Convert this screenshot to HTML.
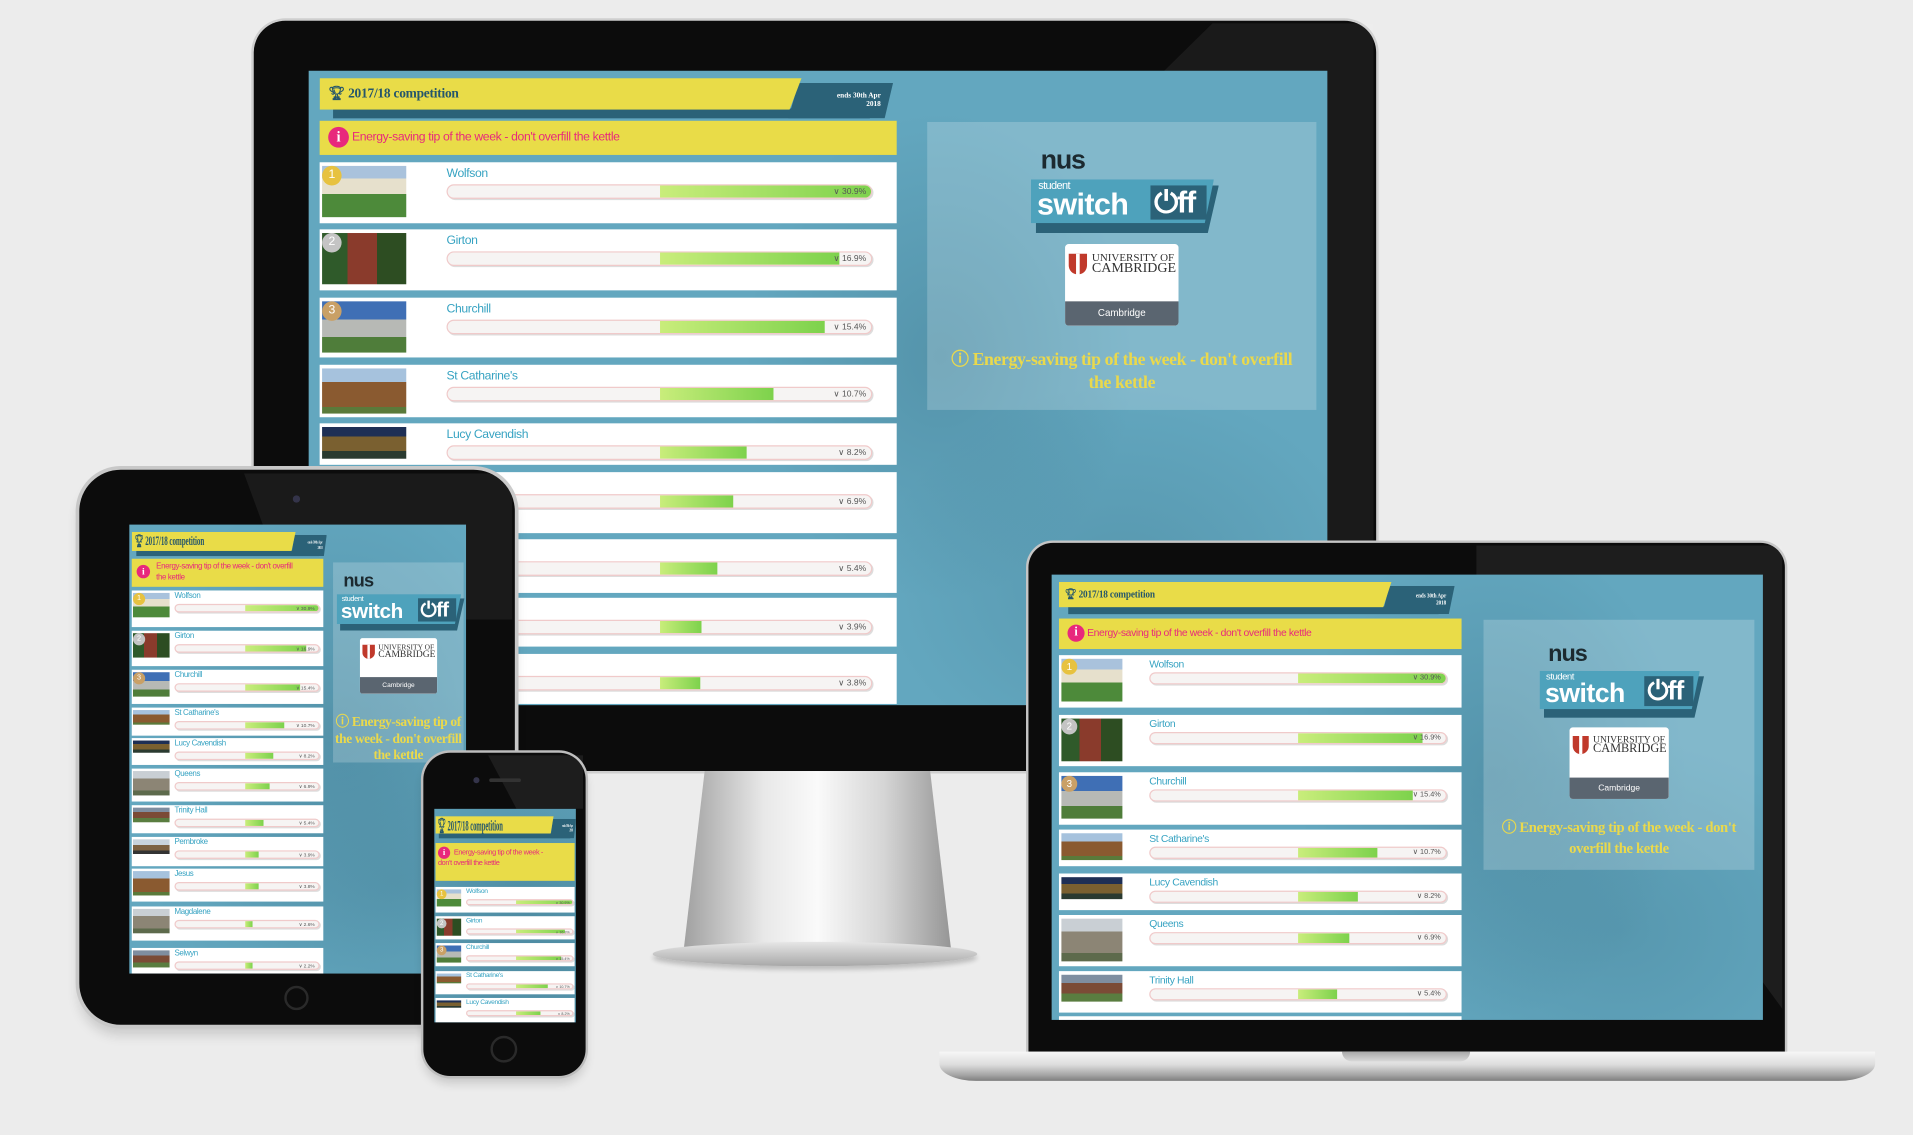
<!DOCTYPE html>
<html><head><meta charset="utf-8">
<style>
*{margin:0;padding:0;box-sizing:border-box}
html,body{width:1913px;height:1135px;overflow:hidden;background:#ececec}
#w{position:absolute;left:0;top:0;width:1568px;height:930px;transform:scale(1.22);transform-origin:0 0;font-family:"Liberation Sans Narrow","Liberation Sans",sans-serif}
.a{position:absolute}
.scr{position:absolute;overflow:hidden;background:radial-gradient(ellipse 160px 200px at 62% 45%,rgba(40,90,110,.25),transparent),radial-gradient(ellipse 200px 160px at 80% 80%,rgba(40,90,110,.2),transparent),#63a7bf}
.hg{position:absolute;width:470px;height:37px;transform-origin:0 0}
.hg .st{position:absolute;left:11px;top:25px;width:440px;height:8px;background:#2b6278}
.hg .tg{position:absolute;left:384px;top:4px;width:86px;height:29px;background:#2b6278;clip-path:polygon(10% 0,100% 0,92% 100%,0 100%);color:#fff;font:bold 6px "Liberation Serif",serif;text-align:right;padding:8px 10px 0 0;line-height:7px}
.hg .y{position:absolute;left:0;top:0;width:395px;height:26px;background:#e9dc48;clip-path:polygon(0 0,100% 0,97.5% 100%,0 100%);color:#25566b;font:bold 11px "Liberation Serif",serif;padding:6px 0 0 7px;letter-spacing:-.2px}
.tip{position:absolute;background:#e9dc48;color:#e8287c;letter-spacing:-.3px}
.ic{display:inline-block;border-radius:50%;background:#e8287c;color:#fff;text-align:center;font-family:"Liberation Serif",serif;font-weight:bold;vertical-align:middle;letter-spacing:0}
.row{position:absolute;background:#fff}
.row .im{position:absolute}
.row .bd{position:absolute;border-radius:50%;color:#fff;text-align:center;font-family:"Liberation Sans",sans-serif}
.row .nm{position:absolute;color:#37a3c2;white-space:nowrap;letter-spacing:-.3px}
.row .bar{position:absolute;border-radius:99px;background:#f6f4f3;border:1px solid #f0caca;overflow:hidden;box-shadow:1px 1px 0 #ddd}
.row .f{position:absolute;top:0;bottom:0;background:linear-gradient(90deg,#c9ed7b,#7dd24c)}
.row .v{position:absolute;right:4px;top:0;color:#555;font-family:"Liberation Sans",sans-serif}
.m .row{left:9px;width:473px}.m .im{left:2px;top:3px;width:69px;height:42px}.m .bd{left:2px;top:3px;width:16px;height:16px;font-size:10px;line-height:16px}.m .nm{left:104px;top:4px;font-size:10px}.m .bar{left:104px;top:18px;width:349px;height:12px}.m .f{left:174px}.m .v{font-size:7px;line-height:11px}
.l .row{left:6px;width:330px}.l .im{left:2px;top:3px;width:50px;height:35px}.l .bd{left:2px;top:3px;width:13px;height:13px;font-size:8px;line-height:13px}.l .nm{left:74px;top:2px;font-size:8.5px}.l .bar{left:74px;top:14px;width:244px;height:10px}.l .f{left:121px}.l .v{font-size:6px;line-height:9px}
.t .row{left:2px;width:157px}.t .im{left:1px;top:2px;width:30px;height:20px}.t .bd{left:1px;top:2px;width:10px;height:10px;font-size:6px;line-height:10px}.t .nm{left:35px;top:1px;font-size:6.5px}.t .bar{left:35px;top:11px;width:119px;height:7px}.t .f{left:57px}.t .v{font-size:4px;line-height:6px;right:3px}
.p .row{left:1px;width:114px}.p .im{left:1px;top:2px;width:20px;height:14px}.p .bd{left:1px;top:2px;width:8px;height:8px;font-size:5px;line-height:8px}.p .nm{left:25px;top:1px;font-size:5.5px}.p .bar{left:25px;top:10px;width:88px;height:5px}.p .f{left:40px}.p .v{font-size:3px;line-height:4px;right:2px}
.g1{background:#e7c240}.g2{background:#c4c4c4}.g3{background:#c9a066}
.i1{background:linear-gradient(#a9c2dc 0 25%,#e6e0cc 25% 55%,#4d8a3a 55%)}
.i2{background:linear-gradient(90deg,#2f5a2a 0 30%,#8a3b2c 30% 65%,#2d4d22 65%)}
.i3{background:linear-gradient(#3f6fb5 0 35%,#b7b9b5 35% 70%,#4f7d3a 70%)}
.i4{background:linear-gradient(#a6c2dd 0 30%,#8a5a30 30% 85%,#5a7a3a 85%)}
.i5{background:linear-gradient(#1e2f55 0 30%,#7a6030 30% 75%,#2a3a30 75%)}
.i6{background:linear-gradient(#c9cfd4 0 30%,#8c8575 30% 80%,#5d6a4c 80%)}
.i7{background:linear-gradient(#7f8ea0 0 30%,#7b4b36 30% 70%,#5a7d40 70%)}
.i8{background:linear-gradient(#c8d3dc 0 40%,#7d6242 40% 75%,#333 75%)}
.pn{position:absolute;background:rgba(255,255,255,.2)}
.lg{position:absolute;width:160px;height:147px;transform-origin:0 0}
.lg .nus{position:absolute;left:8px;top:-4px;font:bold 22px "Liberation Sans",sans-serif;color:#1c2a30;letter-spacing:-1px}
.lg .bg1{position:absolute;left:4px;top:30px;width:150px;height:39px;background:#2b6278;clip-path:polygon(0 0,100% 0,94% 100%,0 100%)}
.lg .bg2{position:absolute;left:0;top:25px;width:150px;height:36px;background:#4ea2bc;clip-path:polygon(0 0,100% 0,95% 100%,0 100%)}
.lg .sw{position:absolute;left:5px;top:24px;color:#fff;font:bold 25px "Liberation Sans",sans-serif;letter-spacing:-.5px}
.lg .sw small{position:absolute;left:1px;top:1px;font-size:9px;font-weight:normal}
.lg .sw b{display:block;padding-top:8px}
.lg .of{position:absolute;left:98px;top:30px;width:46px;height:28px;background:#2b6278;color:#fff;font:bold 25px "Liberation Sans",sans-serif;line-height:28px;padding-left:3px;letter-spacing:-1px}
.lg .cd{position:absolute;left:28px;top:78px;width:93px;height:67px;background:#fff;border-radius:3px;overflow:hidden}
.lg .cd .u{position:absolute;left:22px;top:7px;font:9px/9px "Liberation Serif",serif;color:#333}
.lg .cd .u span{font-size:11.5px}
.lg .cd .sh{position:absolute;left:3px;top:8px;width:15px;height:17px;background:#c0392b;border-radius:0 0 8px 8px}
.lg .cd .sh:after{content:"";position:absolute;left:6px;top:0;width:3px;height:17px;background:#fff}
.lg .cd .gb{position:absolute;left:0;bottom:0;width:100%;height:20px;background:#5a6570;color:#fff;font-size:8px;text-align:center;line-height:20px}
.tt{position:absolute;color:#ead94c;font-family:"Liberation Serif",serif;font-weight:bold;text-align:center;letter-spacing:-.3px}
</style></head><body><div id="w">

<!-- MONITOR -->
<div class="a" style="left:208px;top:17px;width:920px;height:615px;background:#0c0c0c;border-radius:26px 26px 4px 4px;box-shadow:0 0 0 2px #cfcfcf"></div>
<div class="a" style="left:950px;top:19px;width:176px;height:540px;background:rgba(255,255,255,.06);clip-path:polygon(25% 0,100% 0,100% 100%,0 8%)"></div>
<div class="a" style="left:560px;top:632px;width:220px;height:150px;background:linear-gradient(90deg,#a0a0a0,#e8e8e8 30%,#fafafa 50%,#d5d5d5 75%,#959595);clip-path:polygon(8% 0,92% 0,100% 100%,0 100%)"></div>
<div class="a" style="left:535px;top:772px;width:266px;height:20px;border-radius:50%;background:linear-gradient(#e6e6e6,#a8a8a8);box-shadow:0 3px 4px rgba(0,0,0,.2)"></div>

<div class="scr m" style="left:253px;top:58px;width:835px;height:520px">
 <div class="hg" style="left:9px;top:6px"><div class="st"></div><div class="tg">ends 30th Apr<br>2018</div><div class="y">&#127942;&#xFE0E; 2017/18 competition</div></div>
 <div class="tip" style="left:9px;top:41px;width:473px;height:28px;font-size:10px;padding:5px 0 0 7px"><span class="ic" style="width:17px;height:17px;font-size:12px;line-height:17px">i</span> Energy-saving tip of the week - don't overfill the kettle</div>
 <div class="row" style="top:75px;height:50px"><div class="im i1"></div><div class="bd g1">1</div><div class="nm">Wolfson</div><div class="bar"><div class="f" style="width:174px"></div><span class="v">&#x2228; 30.9%</span></div></div>
 <div class="row" style="top:130px;height:50px"><div class="im i2"></div><div class="bd g2">2</div><div class="nm">Girton</div><div class="bar"><div class="f" style="width:147px"></div><span class="v">&#x2228; 16.9%</span></div></div>
 <div class="row" style="top:186px;height:49px"><div class="im i3"></div><div class="bd g3">3</div><div class="nm">Churchill</div><div class="bar"><div class="f" style="width:135px"></div><span class="v">&#x2228; 15.4%</span></div></div>
 <div class="row" style="top:241px;height:43px"><div class="im i4" style="height:37px"></div><div class="nm">St Catharine's</div><div class="bar"><div class="f" style="width:93px"></div><span class="v">&#x2228; 10.7%</span></div></div>
 <div class="row" style="top:289px;height:34px"><div class="im i5" style="height:26px"></div><div class="nm">Lucy Cavendish</div><div class="bar"><div class="f" style="width:71px"></div><span class="v">&#x2228; 8.2%</span></div></div>
 <div class="row" style="top:329px;height:50px"><div class="im i6"></div><div class="nm">Queens</div><div class="bar"><div class="f" style="width:60px"></div><span class="v">&#x2228; 6.9%</span></div></div>
 <div class="row" style="top:384px;height:44px"><div class="im i7" style="height:30px"></div><div class="nm">Trinity Hall</div><div class="bar"><div class="f" style="width:47px"></div><span class="v">&#x2228; 5.4%</span></div></div>
 <div class="row" style="top:432px;height:40px"><div class="im i8" style="height:30px"></div><div class="nm">Pembroke</div><div class="bar"><div class="f" style="width:34px"></div><span class="v">&#x2228; 3.9%</span></div></div>
 <div class="row" style="top:478px;height:41px"><div class="im i4" style="height:34px"></div><div class="nm">Jesus</div><div class="bar"><div class="f" style="width:33px"></div><span class="v">&#x2228; 3.8%</span></div></div>
 <div class="pn" style="left:507px;top:42px;width:319px;height:236px">
  <div class="lg" style="left:85px;top:22px"><div class="nus">nus</div><div class="bg1"></div><div class="bg2"></div><div class="sw"><small>student</small><b>switch</b></div><div class="of">&#x23FB;ff</div><div class="cd"><div class="sh"></div><div class="u">UNIVERSITY OF<br><span>CAMBRIDGE</span></div><div class="gb">Cambridge</div></div></div>
  <div class="tt" style="left:14px;top:186px;width:291px;font-size:14.5px;line-height:19px">&#x24D8; Energy-saving tip of the week - don't overfill the kettle</div>
 </div>
</div>

<!-- LAPTOP -->
<div class="a" style="left:843px;top:445px;width:620px;height:417px;background:#0c0c0c;border-radius:20px 20px 0 0;box-shadow:0 0 0 2px #c6c6c6"></div>
<div class="a" style="left:1210px;top:447px;width:251px;height:380px;background:rgba(255,255,255,.07);clip-path:polygon(0 0,100% 0,100% 100%,0 10%)"></div>
<div class="a" style="left:770px;top:862px;width:767px;height:24px;background:linear-gradient(#f7f7f7,#dcdcdc 45%,#a5a5a5 80%,#7d7d7d);border-radius:0 0 30px 30px/0 0 14px 14px"></div>
<div class="a" style="left:1100px;top:862px;width:105px;height:8px;background:linear-gradient(#a8a8a8,#d8d8d8);border-radius:0 0 8px 8px"></div>

<div class="scr l" style="left:862px;top:471px;width:583px;height:365px">
 <div class="hg" style="left:6px;top:6px;transform:scale(.69,.8)"><div class="st"></div><div class="tg">ends 30th Apr<br>2018</div><div class="y">&#127942;&#xFE0E; 2017/18 competition</div></div>
 <div class="tip" style="left:6px;top:36px;width:330px;height:25px;font-size:8.5px;padding:5px 0 0 7px"><span class="ic" style="width:14px;height:14px;font-size:10px;line-height:14px">i</span> Energy-saving tip of the week - don't overfill the kettle</div>
 <div class="row" style="top:66px;height:43px"><div class="im i1"></div><div class="bd g1">1</div><div class="nm">Wolfson</div><div class="bar"><div class="f" style="width:123px"></div><span class="v">&#x2228; 30.9%</span></div></div>
 <div class="row" style="top:115px;height:42px"><div class="im i2"></div><div class="bd g2">2</div><div class="nm">Girton</div><div class="bar"><div class="f" style="width:102px"></div><span class="v">&#x2228; 16.9%</span></div></div>
 <div class="row" style="top:162px;height:43px"><div class="im i3"></div><div class="bd g3">3</div><div class="nm">Churchill</div><div class="bar"><div class="f" style="width:94px"></div><span class="v">&#x2228; 15.4%</span></div></div>
 <div class="row" style="top:209px;height:30px"><div class="im i4" style="height:22px"></div><div class="nm">St Catharine's</div><div class="bar"><div class="f" style="width:65px"></div><span class="v">&#x2228; 10.7%</span></div></div>
 <div class="row" style="top:245px;height:30px"><div class="im i5" style="height:18px"></div><div class="nm">Lucy Cavendish</div><div class="bar"><div class="f" style="width:49px"></div><span class="v">&#x2228; 8.2%</span></div></div>
 <div class="row" style="top:279px;height:42px"><div class="im i6"></div><div class="nm">Queens</div><div class="bar"><div class="f" style="width:42px"></div><span class="v">&#x2228; 6.9%</span></div></div>
 <div class="row" style="top:325px;height:34px"><div class="im i7" style="height:22px"></div><div class="nm">Trinity Hall</div><div class="bar"><div class="f" style="width:32px"></div><span class="v">&#x2228; 5.4%</span></div></div>
 <div class="row" style="top:362px;height:10px"><div class="im i8"></div></div>
 <div class="pn" style="left:354px;top:37px;width:222px;height:205px">
  <div class="lg" style="left:46px;top:20px;transform:scale(.875)"><div class="nus">nus</div><div class="bg1"></div><div class="bg2"></div><div class="sw"><small>student</small><b>switch</b></div><div class="of">&#x23FB;ff</div><div class="cd"><div class="sh"></div><div class="u">UNIVERSITY OF<br><span>CAMBRIDGE</span></div><div class="gb">Cambridge</div></div></div>
  <div class="tt" style="left:3px;top:162px;width:216px;font-size:12px;line-height:17px">&#x24D8; Energy-saving tip of the week - don't overfill the kettle</div>
 </div>
</div>

<!-- TABLET -->
<div class="a" style="left:65px;top:385px;width:357px;height:455px;background:#0c0c0c;border-radius:34px;box-shadow:0 0 0 3px #c8c8c8,0 8px 10px rgba(0,0,0,.15)"></div>
<div class="a" style="left:200px;top:388px;width:220px;height:120px;background:rgba(255,255,255,.06);clip-path:polygon(0 0,100% 0,100% 100%,20% 100%)"></div>
<div class="a" style="left:240px;top:406px;width:6px;height:6px;border-radius:50%;background:#34344a"></div>
<div class="a" style="left:233px;top:808px;width:20px;height:20px;border-radius:50%;border:2px solid #2a2a2a"></div>

<div class="scr t" style="left:106px;top:430px;width:276px;height:368px">
 <div class="hg" style="left:2px;top:6px;transform:scale(.34,.6)"><div class="st"></div><div class="tg">ends 30th Apr<br>2018</div><div class="y" style="font-size:17px;padding-top:3px">&#127942;&#xFE0E; 2017/18 competition</div></div>
 <div class="tip" style="left:2px;top:28px;width:157px;height:23px;font-size:6.5px;line-height:8.5px;padding:3px 18px 0 20px"><span class="ic" style="position:absolute;left:4px;top:5px;width:11px;height:11px;font-size:8px;line-height:11px">i</span>Energy-saving tip of the week - don't overfill the kettle</div>
 <div class="row" style="top:54px;height:30px"><div class="im i1"></div><div class="bd g1">1</div><div class="nm">Wolfson</div><div class="bar"><div class="f" style="width:62px"></div><span class="v">&#x2228; 30.9%</span></div></div>
 <div class="row" style="top:87px;height:29px"><div class="im i2"></div><div class="bd g2">2</div><div class="nm">Girton</div><div class="bar"><div class="f" style="width:50px"></div><span class="v">&#x2228; 16.9%</span></div></div>
 <div class="row" style="top:119px;height:28px"><div class="im i3"></div><div class="bd g3">3</div><div class="nm">Churchill</div><div class="bar"><div class="f" style="width:45px"></div><span class="v">&#x2228; 15.4%</span></div></div>
 <div class="row" style="top:150px;height:23px"><div class="im i4" style="height:12px"></div><div class="nm">St Catharine's</div><div class="bar"><div class="f" style="width:32px"></div><span class="v">&#x2228; 10.7%</span></div></div>
 <div class="row" style="top:175px;height:22px"><div class="im i5" style="height:10px"></div><div class="nm">Lucy Cavendish</div><div class="bar"><div class="f" style="width:23px"></div><span class="v">&#x2228; 8.2%</span></div></div>
 <div class="row" style="top:200px;height:27px"><div class="im i6"></div><div class="nm">Queens</div><div class="bar"><div class="f" style="width:20px"></div><span class="v">&#x2228; 6.9%</span></div></div>
 <div class="row" style="top:230px;height:23px"><div class="im i7" style="height:12px"></div><div class="nm">Trinity Hall</div><div class="bar"><div class="f" style="width:15px"></div><span class="v">&#x2228; 5.4%</span></div></div>
 <div class="row" style="top:256px;height:24px"><div class="im i8" style="height:12px"></div><div class="nm">Pembroke</div><div class="bar"><div class="f" style="width:11px"></div><span class="v">&#x2228; 3.9%</span></div></div>
 <div class="row" style="top:282px;height:27px"><div class="im i4"></div><div class="nm">Jesus</div><div class="bar"><div class="f" style="width:11px"></div><span class="v">&#x2228; 3.8%</span></div></div>
 <div class="row" style="top:313px;height:28px"><div class="im i6"></div><div class="nm">Magdalene</div><div class="bar"><div class="f" style="width:6px"></div><span class="v">&#x2228; 2.6%</span></div></div>
 <div class="row" style="top:347px;height:22px"><div class="im i7" style="height:14px"></div><div class="nm">Selwyn</div><div class="bar"><div class="f" style="width:6px"></div><span class="v">&#x2228; 2.2%</span></div></div>
 <div class="pn" style="left:167px;top:31px;width:107px;height:164px">
  <div class="lg" style="left:3px;top:9px;transform:scale(.68)"><div class="nus">nus</div><div class="bg1"></div><div class="bg2"></div><div class="sw"><small>student</small><b>switch</b></div><div class="of">&#x23FB;ff</div><div class="cd"><div class="sh"></div><div class="u">UNIVERSITY OF<br><span>CAMBRIDGE</span></div><div class="gb">Cambridge</div></div></div>
  <div class="tt" style="left:1px;top:125px;width:105px;font-size:11px;line-height:13.5px">&#x24D8; Energy-saving tip of the week - don't overfill the kettle</div>
 </div>
</div>

<!-- PHONE -->
<div class="a" style="left:347px;top:617px;width:133px;height:265px;background:#0c0c0c;border-radius:22px;box-shadow:0 0 0 2px #bdbdbd,0 6px 8px rgba(0,0,0,.15)"></div>
<div class="a" style="left:400px;top:619px;width:78px;height:44px;background:rgba(255,255,255,.07);clip-path:polygon(0 0,100% 0,100% 100%,30% 100%)"></div>
<div class="a" style="left:388px;top:637px;width:5px;height:5px;border-radius:50%;background:#34344a"></div>
<div class="a" style="left:401px;top:638px;width:26px;height:3px;border-radius:2px;background:#333"></div>
<div class="a" style="left:402px;top:849px;width:22px;height:22px;border-radius:50%;border:2px solid #2a2a2a"></div>

<div class="scr p" style="left:356px;top:663px;width:116px;height:175px">
 <div class="hg" style="left:1px;top:6px;transform:scale(.245,.55)"><div class="st"></div><div class="tg">ends 30th Apr<br>2018</div><div class="y" style="font-size:22px;padding-top:1px">&#127942;&#xFE0E; 2017/18 competition</div></div>
 <div class="tip" style="left:1px;top:28px;width:114px;height:31px;font-size:6px;line-height:8.5px;padding:3px 14px 0 2px"><span class="ic" style="width:10px;height:10px;font-size:7px;line-height:10px;margin-right:3px">i</span>Energy-saving tip of the week - don't overfill the kettle</div>
 <div class="row" style="top:64px;height:21px"><div class="im i1"></div><div class="bd g1">1</div><div class="nm">Wolfson</div><div class="bar"><div class="f" style="width:48px"></div><span class="v">&#x2228; 30.9%</span></div></div>
 <div class="row" style="top:88px;height:19px"><div class="im i2"></div><div class="bd g2">2</div><div class="nm">Girton</div><div class="bar"><div class="f" style="width:40px"></div><span class="v">&#x2228; 16.9%</span></div></div>
 <div class="row" style="top:110px;height:19px"><div class="im i3"></div><div class="bd g3">3</div><div class="nm">Churchill</div><div class="bar"><div class="f" style="width:37px"></div><span class="v">&#x2228; 15.4%</span></div></div>
 <div class="row" style="top:133px;height:19px"><div class="im i4" style="height:8px"></div><div class="nm">St Catharine's</div><div class="bar"><div class="f" style="width:26px"></div><span class="v">&#x2228; 10.7%</span></div></div>
 <div class="row" style="top:155px;height:20px"><div class="im i5" style="height:6px"></div><div class="nm">Lucy Cavendish</div><div class="bar"><div class="f" style="width:20px"></div><span class="v">&#x2228; 8.2%</span></div></div>
</div>

</div></body></html>
